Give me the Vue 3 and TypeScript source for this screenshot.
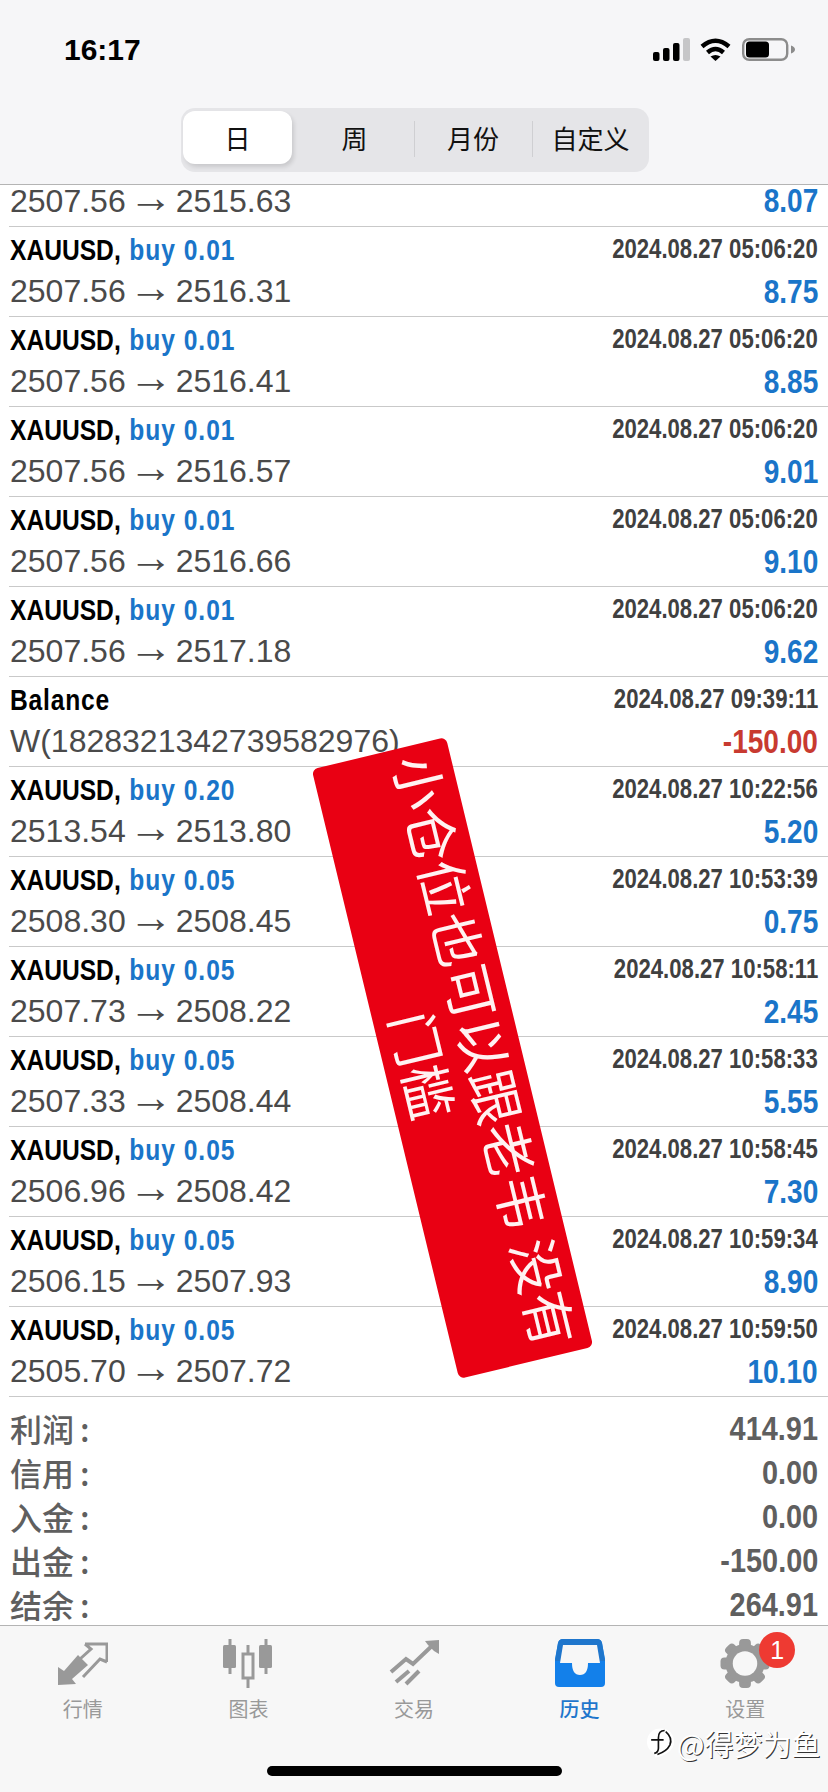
<template>
  <div class="screen">
    <header class="top">
      <div class="status">
        <span class="clock">16:17</span>
        <div class="status-icons">
          <svg width="37" height="23" viewBox="0 0 37 23">
            <rect x="0" y="14" width="6.5" height="9" rx="2" fill="#000" />
            <rect x="10" y="10" width="6.5" height="13" rx="2" fill="#000" />
            <rect x="20" y="5" width="6.5" height="18" rx="2" fill="#000" />
            <rect x="30" y="0" width="7" height="23" rx="2" fill="#c6c6c8" />
          </svg>
          <svg class="wifi" width="31" height="23" viewBox="0 0 31 23">
            <path d="M2 8.5Q15.5-3 29 8.5" fill="none" stroke="#000" stroke-width="4.5" />
            <path d="M7.5 14.5Q15.5 7.5 23.5 14.5" fill="none" stroke="#000" stroke-width="4.5" />
            <path d="M10.5 18.5L15.5 23L20.5 18.5Q15.5 15.5 10.5 18.5Z" fill="#000" />
          </svg>
          <svg class="battery" width="54" height="23" viewBox="0 0 54 23">
            <rect x="1.2" y="1.2" width="44" height="20.6" rx="6" fill="none" stroke="#8c8c8c" stroke-width="2.4" />
            <rect x="4" y="3.5" width="23" height="16" rx="3.5" fill="#000" />
            <path d="M49 7.5Q53 9 53 11.5Q53 14 49 15.5Z" fill="#8c8c8c" />
          </svg>
        </div>
      </div>
      <div class="segment">
        <span
          v-for="(label, i) in periods"
          :key="label"
          class="seg-item"
          :class="{ active: i === 0, ruled: i > 1 }"
        >{{ label }}</span>
      </div>
    </header>

    <main class="list">
      <div class="rows">
        <div v-for="(r, i) in rows" :key="i" class="row" :class="{ partial: !r.date }">
          <div v-if="r.date" class="line">
            <span class="sym" :class="{ plain: !r.side }">{{ r.sym }}<template v-if="r.side">, <span class="side">{{ r.side }}</span></template></span>
            <span class="date">{{ r.date }}</span>
          </div>
          <div class="line lower">
            <span class="price">{{ r.from }}<template v-if="r.to"><span class="arrow">→</span>{{ r.to }}</template></span>
            <span class="profit" :class="{ loss: r.profit.startsWith('-') }">{{ r.profit }}</span>
          </div>
        </div>
      </div>
      <div class="summary">
        <div v-for="s in summary" :key="s.label" class="sum-row">
          <span class="sum-label">{{ s.label }}<i>:</i></span>
          <span class="sum-value">{{ s.value }}</span>
        </div>
      </div>
    </main>

    <nav class="tabs">
      <div class="tab">
        <svg width="50" height="49" viewBox="0 0 50 49">
          <path d="M0 46V28L6 32L20 16L30 26L14 40L18 45Z" fill="#999" />
          <path d="M27 5L33 10L22 20M49 23L42 20L25 38M27 5H49V23" fill="none" stroke="#999" stroke-width="3" />
        </svg>
        <span>行情</span>
      </div>
      <div class="tab">
        <svg width="50" height="49" viewBox="0 0 50 49">
          <g fill="#999">
            <rect x="5.5" y="0" width="3" height="35" />
            <rect x="0" y="6" width="13" height="23" rx="1.5" />
            <rect x="41.5" y="0" width="3" height="35" />
            <rect x="36" y="6" width="13" height="23" rx="1.5" />
            <rect x="23.5" y="6" width="3" height="43" />
          </g>
          <rect x="20" y="15" width="10" height="24" fill="#f7f7f7" stroke="#999" stroke-width="3" />
        </svg>
        <span>图表</span>
      </div>
      <div class="tab">
        <svg width="50" height="49" viewBox="0 0 50 49">
          <g fill="none" stroke="#999" stroke-width="4">
            <path d="M2 33L17 20L24 25L46 4" />
            <path d="M7 43L20 32" />
            <path d="M17 45L30 32" />
          </g>
          <path d="M36 2L50 1V15L45 12L39 6Z" fill="#999" />
        </svg>
        <span>交易</span>
      </div>
      <div class="tab current">
        <svg width="50" height="49" viewBox="0 0 50 49">
          <path d="M8 0H42Q46 0 47 4L50 20V44Q50 48 46 48H4Q0 48 0 44V20L3 4Q4 0 8 0Z" fill="#1380ea" />
          <path d="M8 0H42Q46 0 47 4L50 22H0L3 4Q4 0 8 0Z" fill="#1f76cc" />
          <path d="M8 6H42L45 24H33Q33 36 25 36Q17 36 17 24H5Z" fill="#f7f7f7" />
        </svg>
        <span>历史</span>
      </div>
      <div class="tab">
        <div class="gear-wrap">
          <svg width="50" height="49" viewBox="0 0 50 50">
            <g fill="#999">
              <rect
                v-for="a in gearTeeth"
                :key="a"
                x="19"
                y="0"
                width="12"
                height="50"
                rx="4"
                :transform="`rotate(${a} 25 25)`"
              />
              <circle cx="25" cy="25" r="20" />
            </g>
            <circle cx="25" cy="25" r="12.5" fill="#f7f7f7" />
          </svg>
          <span class="badge">1</span>
        </div>
        <span>设置</span>
      </div>
    </nav>

    <div class="home-bar"></div>

    <div class="banner">小仓位也可以跟老韦 没有<br />门槛</div>

    <div class="mark">
      <svg width="27" height="30" viewBox="0 0 26 28">
        <path d="M13 0C22 0 26 6 26 13C26 21 18 26 8 28L6 23C2 21 0 17 0 13C0 6 5 0 13 0Z" fill="#fff" />
        <path d="M17 2C12 2 11 5 11 9V19Q11 23 7 24M4 11H16M18 3Q25 9 22 16Q19 22 10 25" fill="none" stroke="#111" stroke-width="1.6" />
      </svg>
      <span>@得梦为鱼</span>
    </div>
  </div>
</template>

<script setup lang="ts">
interface Row {
  sym?: string
  side?: string
  date?: string
  from: string
  to?: string
  profit: string
}

const periods = ["日", "周", "月份", "自定义"]
const gearTeeth = [0, 45, 90, 135]

function trade(side: string, date: string, from: string, to: string, profit: string): Row {
  return { sym: "XAUUSD", side, date: `2024.08.27 ${date}`, from, to, profit }
}

const rows: Row[] = [
  { from: "2507.56", to: "2515.63", profit: "8.07" },
  trade("buy 0.01", "05:06:20", "2507.56", "2516.31", "8.75"),
  trade("buy 0.01", "05:06:20", "2507.56", "2516.41", "8.85"),
  trade("buy 0.01", "05:06:20", "2507.56", "2516.57", "9.01"),
  trade("buy 0.01", "05:06:20", "2507.56", "2516.66", "9.10"),
  trade("buy 0.01", "05:06:20", "2507.56", "2517.18", "9.62"),
  { sym: "Balance", date: "2024.08.27 09:39:11", from: "W(1828321342739582976)", profit: "-150.00" },
  trade("buy 0.20", "10:22:56", "2513.54", "2513.80", "5.20"),
  trade("buy 0.05", "10:53:39", "2508.30", "2508.45", "0.75"),
  trade("buy 0.05", "10:58:11", "2507.73", "2508.22", "2.45"),
  trade("buy 0.05", "10:58:33", "2507.33", "2508.44", "5.55"),
  trade("buy 0.05", "10:58:45", "2506.96", "2508.42", "7.30"),
  trade("buy 0.05", "10:59:34", "2506.15", "2507.93", "8.90"),
  trade("buy 0.05", "10:59:50", "2505.70", "2507.72", "10.10"),
]

const summary = [
  { label: "利润", value: "414.91" },
  { label: "信用", value: "0.00" },
  { label: "入金", value: "0.00" },
  { label: "出金", value: "-150.00" },
  { label: "结余", value: "264.91" },
]
</script>

<style>
body {
  background: #fff;
}
</style>

<style scoped>
.screen {
  position: relative;
  width: 828px;
  height: 1792px;
  overflow: hidden;
  display: flex;
  flex-direction: column;
  background: #fff;
  font-family: "Liberation Sans", "Noto Sans CJK SC", sans-serif;
}

.top {
  flex: none;
  height: 185px;
  box-sizing: border-box;
  padding-top: 38px;
  background: #f6f6f8;
  border-bottom: 1px solid #b4b4b4;
}
.status {
  display: flex;
  justify-content: space-between;
  align-items: center;
  height: 23px;
  padding: 0 32px 0 64px;
}
.clock {
  font-size: 30px;
  font-weight: 700;
  color: #000;
  line-height: 23px;
}
.status-icons {
  display: flex;
  align-items: center;
  gap: 10px;
}
.wifi {
  margin-right: 1px;
}
.segment {
  display: grid;
  grid-template-columns: 109px 122px 118px 1fr;
  width: 468px;
  height: 64px;
  box-sizing: border-box;
  margin: 47px 0 0 181px;
  padding: 3px 2px 8px;
  border-radius: 14px;
  background: #e5e5e8;
}
.seg-item {
  display: flex;
  align-items: center;
  justify-content: center;
  font-size: 26px;
  color: #111;
  position: relative;
}
.seg-item:nth-child(2) {
  padding-left: 3px;
}
.seg-item:nth-child(4) {
  padding-left: 2px;
}
.seg-item.active {
  background: #fff;
  border-radius: 12px;
  box-shadow: 2px 3px 4px rgba(0, 0, 0, 0.12);
}
.seg-item.ruled::before {
  content: "";
  position: absolute;
  left: 0;
  top: 10px;
  height: 36px;
  width: 1px;
  background: #cfcfd2;
}

.list {
  flex: 1;
  min-height: 0;
}
.rows {
  padding-left: 9px;
}
.row {
  height: 90px;
  box-sizing: border-box;
  padding: 2px 10px 0 1px;
  border-bottom: 1px solid #c9c9c9;
}
.row.partial {
  height: 42px;
  padding-top: 0;
}
.row.partial .line {
  height: 32px;
  margin-top: 0;
}
.line {
  display: flex;
  justify-content: space-between;
  align-items: center;
  height: 41px;
}
.line.lower {
  margin-top: 1px;
}
.sym,
.date,
.profit,
.sum-value {
  display: inline-block;
  white-space: nowrap;
}
.sym {
  font-size: 30px;
  font-weight: 700;
  color: #000;
  transform: scaleX(0.82);
  transform-origin: left center;
}
.sym.plain {
  letter-spacing: 1px;
}
.side {
  margin-left: 2px;
  letter-spacing: 1.2px;
  color: #1a75c9;
}
.date {
  font-size: 27px;
  font-weight: 700;
  color: #404040;
  transform: scaleX(0.82);
  transform-origin: right center;
}
.price {
  font-size: 32px;
  color: #4a4a4a;
}
.arrow {
  margin: 0 3px;
  font-size: 44px;
  line-height: 0;
}
.profit {
  font-size: 33px;
  font-weight: 700;
  color: #1a75c9;
  transform: scaleX(0.85);
  transform-origin: right center;
}
.profit.loss {
  color: #c83a30;
}

.summary {
  padding: 9px 10px 0 10px;
}
.sum-row {
  display: flex;
  justify-content: space-between;
  align-items: center;
  height: 44px;
  color: #5f5f5f;
  font-weight: 700;
}
.sum-label {
  font-size: 32px;
  font-family: "Noto Sans CJK SC", sans-serif;
  font-weight: 500;
}
.sum-label i {
  font-style: normal;
  margin-left: 6px;
}
.sum-value {
  font-size: 34px;
  transform: scaleX(0.85);
  transform-origin: right center;
}

.tabs {
  flex: none;
  height: 167px;
  box-sizing: border-box;
  padding-top: 13px;
  display: grid;
  grid-template-columns: repeat(5, 1fr);
  align-items: start;
  background: #f7f7f7;
  border-top: 1px solid #b4b4b4;
}
.tab {
  display: flex;
  flex-direction: column;
  align-items: center;
  gap: 9px;
  font-size: 20px;
  line-height: 26px;
  color: #999;
}
.tab.current {
  color: #1f76cc;
  font-weight: 500;
}
.gear-wrap {
  position: relative;
  height: 49px;
}
.gear-wrap svg {
  display: block;
}
.badge {
  position: absolute;
  left: 39px;
  top: -7px;
  width: 36px;
  height: 36px;
  border-radius: 50%;
  background: #ee3a32;
  color: #fff;
  font-size: 25px;
  line-height: 36px;
  text-align: center;
}

.home-bar {
  position: absolute;
  left: 267px;
  top: 1766px;
  width: 295px;
  height: 10px;
  border-radius: 5px;
  background: #000;
}

.banner {
  position: absolute;
  left: 139px;
  top: 989px;
  width: 627px;
  height: 138px;
  box-sizing: border-box;
  padding-top: 2px;
  transform: rotate(76.4deg);
  border-radius: 6px;
  background: #e90013;
  color: #fff2f2;
  font-family: "Noto Sans CJK SC", sans-serif;
  font-weight: 400;
  font-size: 54px;
  line-height: 64px;
  text-align: center;
  white-space: nowrap;
}

.mark {
  position: absolute;
  left: 647px;
  top: 1727px;
  display: flex;
  align-items: center;
  gap: 3px;
  font-size: 29px;
  line-height: 32px;
  color: #fff;
  font-family: "Noto Sans CJK SC", sans-serif;
  text-shadow: 1px 1px 0 #333;
}
</style>
